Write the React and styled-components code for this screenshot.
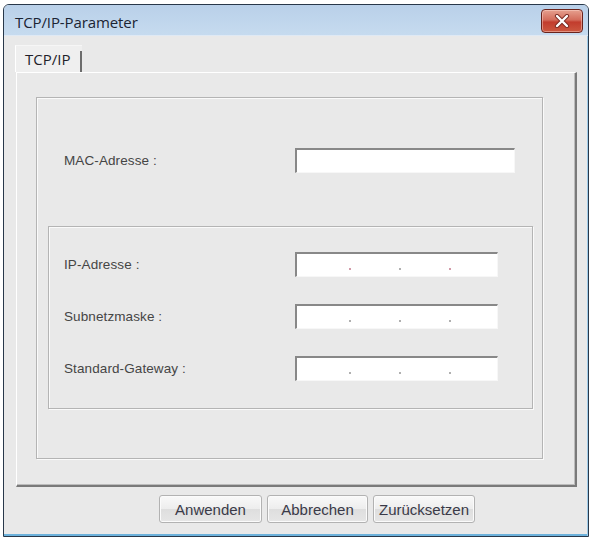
import React from 'react';
import styled, { createGlobalStyle } from 'styled-components';

const GlobalStyle = createGlobalStyle`
	html, body {
		margin: 0;
		padding: 0;
		background: #fff;
	}
	* {
		box-sizing: border-box;
	}
`;

const Window = styled.div`
	margin: 4px 0 0 3px;
	width: 586px;
	height: 533px;
	display: flex;
	flex-direction: column;
	border: 1px solid #28384a;
	border-radius: 6px 6px 0 0;
	overflow: hidden;
	background: #e9e9e9;
`;

const TitleBar = styled.div`
	height: 31px;
	flex-shrink: 0;
	display: flex;
	align-items: flex-start;
	justify-content: space-between;
	padding: 4px 5px 0 11px;
	background: linear-gradient(#b9d0e9, #c6dbef);
	border-bottom: 1px solid #dfe9f4;
`;

const Title = styled.span`
	margin-top: 3px;
	font: 15px 'Open Sans', 'Noto Sans', sans-serif;
	color: #1b2433;
	letter-spacing: -0.1px;
`;

const CloseButton = styled.div`
	width: 42px;
	height: 24px;
	display: flex;
	align-items: center;
	justify-content: center;
	border: 1px solid #6a231c;
	border-radius: 4px;
	background: linear-gradient(#e6a08f 0%, #d36c5b 45%, #c23c2d 55%, #cc5840 100%);
	box-shadow: inset 0 0 0 1px rgba(255, 220, 210, 0.45);
`;

const Client = styled.div`
	flex: 1;
	display: flex;
	flex-direction: column;
	padding: 9px 10px 0 11px;
	box-shadow: inset -1px 0 #9fcbe8, inset 0 -2px #6db2dc;
`;

const TabStrip = styled.div`
	display: flex;
	height: 27px;
`;

const Tab = styled.div`
	width: 67px;
	height: 27px;
	padding: 3px 0 0 9px;
	background: #efefef;
	border-left: 1px solid #fff;
	border-top: 1px solid #f6f6f6;
	position: relative;
	font: 15px 'Open Sans', 'Noto Sans', sans-serif;
	color: #1f1f2a;
	&:after {
		content: '';
		position: absolute;
		right: 0;
		top: 5px;
		bottom: 0;
		width: 2px;
		background: #6c6c6c;
	}
`;

const TabPanel = styled.div`
	margin-left: 1px;
	width: 561px;
	height: 415px;
	padding: 24px 0 0 19px;
	border-top: 1px solid #fff;
	border-left: 1px solid #fff;
	border-right: 2px solid #7a7a7a;
	border-bottom: 2px solid #7a7a7a;
	box-shadow: inset -1px -1px #bcbcbc;
`;

const GroupBox = styled.div`
	display: flex;
	flex-direction: column;
	width: ${p => p.$width}px;
	margin-left: ${p => p.$offset || 0}px;
	border: 1px solid #b4b4b4;
	box-shadow: inset 1px 1px #fafafa, 1px 1px #fafafa;
	padding: ${p => p.$padding};
	gap: ${p => p.$gap}px;
`;

const Row = styled.div`
	display: flex;
	align-items: center;
	height: 25px;
	padding-left: ${p => p.$indent}px;
`;

const Label = styled.span`
	width: ${p => p.$width}px;
	font: 13.5px 'Liberation Sans', Arial, sans-serif;
	color: #454545;
	letter-spacing: 0.1px;
`;

const Field = styled.div`
	width: ${p => p.$width}px;
	height: 25px;
	background: #fff;
	border-top: 2px solid #888;
	border-left: 2px solid #888;
	border-right: 1px solid #f7f7f7;
	border-bottom: 1px solid #f7f7f7;
`;

const IpField = styled(Field)`
	display: flex;
	align-items: flex-end;
	gap: 48px;
	padding: 0 0 6px 52px;
`;

const Dot = styled.span`
	width: 2px;
	height: 2px;
	background: ${p => p.$color};
`;

const ButtonBar = styled.div`
	display: flex;
	gap: 5px;
	padding: 8px 0 0 144px;
`;

const Button = styled.div`
	width: ${p => p.$width}px;
	height: 28px;
	display: flex;
	align-items: center;
	justify-content: center;
	border: 1px solid #b2b2b2;
	border-radius: 3px;
	background: linear-gradient(#f9f9f9 0%, #ededed 50%, #dedede 51%, #e6e6e6 100%);
	box-shadow: inset 0 0 0 1px #fbfbfb;
	font: 15px 'Liberation Sans', Arial, sans-serif;
	color: #3a3a48;
`;

const ipRows = ['IP-Adresse :', 'Subnetzmaske :', 'Standard-Gateway :'];

const App = () => {
	return (
		<>
			<GlobalStyle />
			<Window>
				<TitleBar>
					<Title>TCP/IP-Parameter</Title>
					<CloseButton>
						<svg width="16" height="14" viewBox="0 0 16 14">
							<path d="M3 2 L13 12 M13 2 L3 12" stroke="#7a2a22" strokeWidth="4.2" strokeLinecap="round" />
							<path d="M3 2 L13 12 M13 2 L3 12" stroke="#fff" strokeWidth="2.4" strokeLinecap="round" />
						</svg>
					</CloseButton>
				</TitleBar>
				<Client>
					<TabStrip>
						<Tab>TCP/IP</Tab>
					</TabStrip>
					<TabPanel>
						<GroupBox $width={507} $padding="50px 11px 49px 0" $gap={53}>
							<Row $indent={27}>
								<Label $width={231}>MAC-Adresse :</Label>
								<Field $width={220} />
							</Row>
							<GroupBox $width={485} $offset={11} $padding="25px 0 27px 0" $gap={27}>
								{ipRows.map((label, i) => (
									<Row key={label} $indent={15}>
										<Label $width={231}>{label}</Label>
										<IpField $width={203}>
											<Dot $color={i === 0 ? '#d29aa8' : '#b0b0b0'} />
											<Dot $color="#b0b0b0" />
											<Dot $color={i === 0 ? '#d29aa8' : '#b0b0b0'} />
										</IpField>
									</Row>
								))}
							</GroupBox>
						</GroupBox>
					</TabPanel>
					<ButtonBar>
						<Button $width={103}>Anwenden</Button>
						<Button $width={101}>Abbrechen</Button>
						<Button $width={102}>Zurücksetzen</Button>
					</ButtonBar>
				</Client>
			</Window>
		</>
	);
};

export default App;
